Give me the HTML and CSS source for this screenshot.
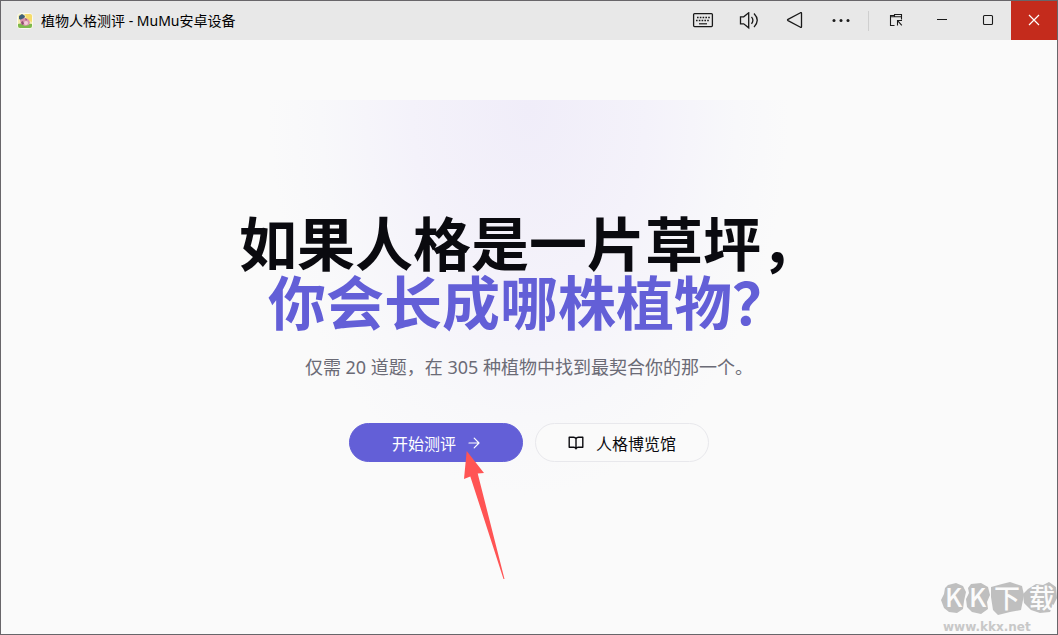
FILE: index.html
```html
<!DOCTYPE html>
<html lang="zh-CN">
<head>
    <meta charset="UTF-8">
    <meta name="viewport" content="width=device-width, initial-scale=1.0">
    <title>植物人格测评 - MuMu安卓设备</title>
    <link rel="stylesheet" href="styles.css">
</head>
<body>
    <header class="titlebar">
        <svg class="app-icon" width="16" height="16" viewBox="0 0 16 16" aria-hidden="true">
            <rect x="0.5" y="0.5" width="15" height="15" rx="3" fill="#f5edb0" stroke="#fbfbf0"/>
            <path d="M8 1h5q2 0 2 2v6l-5-2z" fill="#f6dc6c"/>
            <path d="M1 11l5-1 9 1v2q0 2-2 2H3q-2 0-2-2z" fill="#7db94c"/>
            <path d="M2 3l3-2 3 2-1 3-3 1-2-1z" fill="#3f5f78"/>
            <path d="M3 7l4-2 4 1 2 3-1 3-4 1-4-2z" fill="#d994ad"/>
            <path d="M4 9l2-1 1 3-2 1zM8 5l2 1-1 2z" fill="#8f4f70"/>
            <circle cx="9" cy="10" r="2" fill="#f3cfd8"/>
        </svg>
        <span class="title">植物人格测评 - MuMu安卓设备</span>
        <div class="tools">
            <button type="button" aria-label="键盘">
                <svg width="22" height="18" viewBox="0 0 22 18" fill="none" stroke="#1a1a1a">
                    <rect x="1.6" y="1.6" width="18.8" height="13" rx="1" stroke-width="1.3"/>
                    <path d="M5 5.5h13" stroke-width="1.6" stroke-dasharray="1.6 1.2"/>
                    <path d="M4 8.5h13" stroke-width="1.6" stroke-dasharray="1.6 1.2"/>
                    <path d="M7 11.8h8" stroke-width="1.2"/>
                </svg>
            </button>
            <button type="button" aria-label="音量">
                <svg width="20" height="18" viewBox="0 0 20 18" fill="none" stroke="#1a1a1a" stroke-width="1.3">
                    <path d="M1.5 4.8h3.2L9.7.8v15L4.7 11.8H1.5z"/>
                    <path d="M12.5 4.8q2.8 3.5 0 7M15 1.5q6.500 6.800 0 13.600"/>
                </svg>
            </button>
            <button type="button" aria-label="返回">
                <svg width="18" height="18" viewBox="0 0 18 18" fill="none" stroke="#1a1a1a" stroke-width="1.3" stroke-linejoin="round">
                    <path d="M15.5 1.200v13.600q0 1-1 .5L2 8.600q-1-.6 0-1.200L14.500.7q1-.5 1 .5z"/>
                </svg>
            </button>
            <button type="button" aria-label="更多">
                <svg width="18" height="18" viewBox="0 0 18 18" fill="#1a1a1a">
                    <circle cx="2" cy="8.500" r="1.5"/>
                    <circle cx="9" cy="8.500" r="1.5"/>
                    <circle cx="16" cy="8.500" r="1.5"/>
                </svg>
            </button>
            <span class="divider"></span>
            <button type="button" aria-label="小窗">
                <svg width="14" height="16" viewBox="0 0 14 16" fill="none" stroke="#1a1a1a" stroke-width="1.1">
                    <path d="M5.500 12.500h-4v-10h4M5.500 3.800V1.500h7v5M1.500 3.800h11"/>
                    <path d="M8.500 12.500V7.500H13M8.800 7.800l4 4.500"/>
                </svg>
            </button>
            <button type="button" aria-label="最小化">
                <svg width="12" height="12" viewBox="0 0 12 12" stroke="#1a1a1a"><path d="M1 4.500h10"/></svg>
            </button>
            <button type="button" aria-label="最大化">
                <svg width="12" height="14" viewBox="0 0 12 14" fill="none" stroke="#1a1a1a" stroke-width="1.1"><rect x="1.5" y="1.5" width="9" height="9" rx="1"/></svg>
            </button>
            <button type="button" class="close" aria-label="关闭">
                <svg width="12" height="14" viewBox="0 0 12 14" stroke="#fff" stroke-width="1.2"><path d="M1 1l10 10M11 1L1 11"/></svg>
            </button>
        </div>
    </header>

    <main class="hero">
        <h1>如果人格是一片草坪，<br><span>你会长成哪株植物？</span></h1>
        <p>仅需 20 道题，在 305 种植物中找到最契合你的那一个。</p>
        <div class="actions">
            <div class="start">
                <button type="button" class="btn btn-primary">
                    开始测评
                    <svg width="12" height="12" viewBox="0 0 12 12" fill="none" stroke="#fff" stroke-width="1.2" stroke-linecap="round" stroke-linejoin="round"><path d="M1 6h10M6.2 1.2L11 6l-4.800 4.800"/></svg>
                </button>
                <svg class="pointer" width="42" height="130" viewBox="0 0 42 130" aria-hidden="true">
                    <path d="M2.7 0L0 28l6.3-2.6L39.500 128h1L13.700 22.500l6.300-.5z" fill="#ff5454"/>
                </svg>
            </div>
            <button type="button" class="btn btn-outline">
                <svg width="16" height="14" viewBox="0 0 16 14" fill="none" stroke="#0a0a0f" stroke-width="1.4" stroke-linejoin="round"><path d="M8 12.800V2.800Q7.300 1.200 5.500 1.200H1.200v10h4.600Q7.500 11.200 8 12.800zM8 2.800Q8.700 1.200 10.500 1.200h4.300v10h-4.600Q8.500 11.200 8 12.800"/></svg>
                人格博览馆
            </button>
        </div>
    </main>

    <div class="watermark">
        <svg width="116" height="40" viewBox="0 0 116 40">
            <g fill="#bfbfbf">
                <path d="M7 5l8-2 7 3 3 6-2 9-1 8-6 4-8-1-5-4-3-8 3-6 1-6z"/>
                <path d="M30 4l10-1 7 4 2 8-3 7 1 7-7 5-9-2-5-5-1-8 3-6-1-5z"/>
                <path d="M50 7l11-3 8-2 12 4 2 9-3 15-11 2-12 3-5-5-2-13z"/>
                <path d="M87 9l8-5 7 1 6-3 7 5 1 11-4 8-3 6-10 1-9-3-7-7-1-9z"/>
            </g>
            <g class="watermark-name" fill="#fbfbfb">
                <text x="4" y="27">K</text>
                <text x="28" y="27">K</text>
                <text x="53" y="28">下</text>
                <text x="88" y="28">载</text>
            </g>
        </svg>
        <span>www.kkx.net</span>
    </div>
</body>
</html>
```

FILE: styles.css
```css
* {
    box-sizing: border-box;
}

body {
    margin: 0;
    min-height: 100vh;
    position: relative;
    border: 1px solid #68666a;
    background-color: #fafafa;
    color: #0a0a0f;
    font-family: "Noto Sans CJK SC", sans-serif;
}

button {
    font-family: inherit;
    cursor: pointer;
}

.titlebar {
    display: flex;
    align-items: center;
    height: 39px;
    padding-left: 16px;
    background-color: #e8e8e8;
}

.title {
    margin-left: 8px;
    font-family: "Noto Sans", "Noto Sans CJK SC", sans-serif;
    font-size: 14px;
    line-height: 20px;
    color: #000;
}

.tools {
    display: flex;
    align-items: center;
    align-self: stretch;
    margin-left: auto;
}

.tools button {
    display: flex;
    align-items: center;
    justify-content: center;
    width: 46px;
    height: 100%;
    padding: 0;
    border: none;
    background: none;
}

.tools .close {
    background-color: #c42b1c;
}

.divider {
    width: 1px;
    height: 20px;
    margin: 0 4px;
    background-color: #cfcfcf;
}

.hero {
    margin-top: 60px;
    padding: 112px 16px 40px;
    text-align: center;
    background-image: radial-gradient(260px 385px at 50% 10px, #f0edf9, #f4f2fa 45%, #f8f8fa 80%, #fafafa);
    background-repeat: no-repeat;
}

h1 {
    margin: 0;
    font-size: 58px;
    font-weight: 700;
    line-height: 59px;
}

h1 span {
    color: #635fd7;
}

.hero p {
    margin: 22px 0 41px;
    font-family: "Noto Sans", "Noto Sans CJK SC", sans-serif;
    font-size: 18px;
    line-height: 30px;
    color: #6b6b76;
}

.actions {
    display: flex;
    flex-wrap: wrap;
    justify-content: center;
    gap: 12px;
}

.start {
    position: relative;
}

.btn {
    display: flex;
    align-items: center;
    justify-content: center;
    gap: 12px;
    min-width: 174px;
    height: 39px;
    border: 1px solid #e8e8ec;
    border-radius: 20px;
    background-color: #fafafa;
    color: #0a0a0f;
    font-size: 16px;
}

.btn-primary {
    border-color: #635fd7;
    background-color: #635fd7;
    color: #fff;
}

/* red arrow pointing at the start button */
.pointer {
    position: absolute;
    top: 28px;
    left: 115px;
    pointer-events: none;
}

.watermark {
    position: absolute;
    right: 0;
    bottom: 0;
    width: 116px;
    color: #c8c8c8;
}

.watermark svg {
    display: block;
    overflow: visible;
}

.watermark-name {
    font-size: 26px;
    font-weight: 500;
}

.watermark span {
    display: block;
    padding-left: 2px;
    font-family: "DejaVu Sans", sans-serif;
    font-size: 12px;
    font-weight: 700;
    line-height: 14px;
}
```
